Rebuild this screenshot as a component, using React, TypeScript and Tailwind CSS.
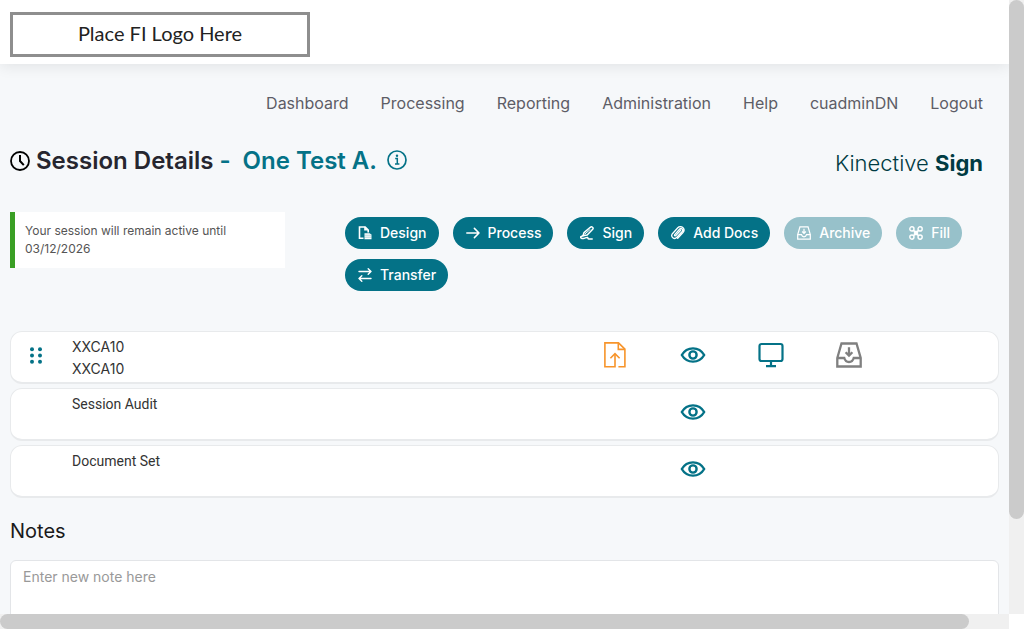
import { useState } from 'react';
import type { ReactNode } from 'react';

const navItems = ['Dashboard', 'Processing', 'Reporting', 'Administration', 'Help', 'cuadminDN', 'Logout'];

function ClockIcon() {
  return (
    <svg viewBox="0 0 20 20" className="w-5 h-5 shrink-0" fill="none" stroke="currentColor" aria-hidden="true">
      <circle cx="10" cy="10" r="9" strokeWidth="1.8" />
      <path d="M10 4v6l3.8 4.2" strokeWidth="2" />
    </svg>
  );
}

function InfoIcon() {
  return (
    <svg viewBox="0 0 20 20" className="w-5 h-5" fill="none" stroke="currentColor" aria-hidden="true">
      <circle cx="10" cy="10" r="9" strokeWidth="1.7" />
      <path d="M8.2 8.6h2.1V14M8 14.1h4.4" strokeWidth="1.5" />
      <circle cx="10" cy="5.8" r="1.2" fill="currentColor" stroke="none" />
    </svg>
  );
}

function DesignIcon() {
  return (
    <svg viewBox="0 0 14 14" className="w-3.5 h-3.5" fill="none" stroke="currentColor" aria-hidden="true">
      <path d="M5.5 12.2H1.5V1h5.7l3 3v2.5" strokeWidth="1.6" />
      <path d="M6.2.6v4h4z" fill="currentColor" stroke="none" />
      <path d="M6.5 7.2h5l2 1.3v4.7h-7z" fill="currentColor" stroke="none" />
      <path d="M6.5 9.2h7M6.5 11.2h7" stroke="#047287" strokeOpacity=".5" strokeWidth=".6" />
    </svg>
  );
}

function ProcessIcon() {
  return (
    <svg viewBox="0 0 14 14" className="w-3.5 h-3.5" fill="none" stroke="currentColor" strokeWidth="1.5" strokeLinecap="round" strokeLinejoin="round" aria-hidden="true">
      <path d="M.8 7h12.2M8.4 2.4 13 7l-4.6 4.6" />
    </svg>
  );
}

function SignIcon() {
  return (
    <svg viewBox="0 0 14 14" className="w-3.5 h-3.5" fill="none" stroke="currentColor" strokeWidth="1.5" strokeLinecap="round" strokeLinejoin="round" aria-hidden="true">
      <path d="M3 9.7 4 6.6 10.3 1.3c1.5-1.2 3.6.4 2.4 2L7.2 9 3 9.7Z" />
      <path d="M5 7.9 10 3.6" strokeWidth="1" />
      <path d="M3 9.7.8 10.6c-.5 1.2.8 2 2.6 1.9 1.6-.1 3-1.5 4.1-1 .7.4.2 1.3 1.3 1.4h3.4" />
    </svg>
  );
}

function ClipIcon() {
  return (
    <svg viewBox="0 0 14 14" className="w-3.5 h-3.5" fill="none" stroke="currentColor" strokeWidth="1.3" strokeLinecap="round" strokeLinejoin="round" aria-hidden="true">
      <path d="m9.7 4.3-4.9 5.3c-.6.7-1.7-.2-1.1-1l4.8-5.3c1.7-1.8 4.2.3 2.7 2.2l-5.3 5.8c-2.6 2.8-6.7-.4-4.5-3.6l5.4-5.9c1.3-1.3 3.6-1.5 5-.2 1.5 1.4 1.5 3.5.2 5l-5.3 5.8" />
    </svg>
  );
}

function ArchiveIcon({ className }: { className: string }) {
  return (
    <svg viewBox="0 0 26 26" className={className} fill="none" stroke="currentColor" strokeWidth="2.3" aria-hidden="true">
      <path d="M1.3 16 5.5 1.5h15L24.7 16v8.5H1.3Z" />
      <path d="M1.3 16h7c.7 2.500 2.400 4 4.700 4s4-1.500 4.700-4h7" />
      <path d="M13 5.200v8M9.600 10.200l3.400 3.400 3.400-3.400" />
    </svg>
  );
}

function FillIcon() {
  return (
    <svg viewBox="0 0 14 14" className="w-3.5 h-3.5" fill="none" stroke="currentColor" strokeWidth="1.4" aria-hidden="true">
      <circle cx="2.9" cy="2.9" r="2.1" />
      <circle cx="11.1" cy="2.9" r="2.1" />
      <circle cx="2.9" cy="11.1" r="2.1" />
      <circle cx="11.1" cy="11.1" r="2.1" />
      <path d="m4.3 4.3 2 1.2h1.4l2-1.2M4.3 9.7l2-1.2h1.4l2 1.2M5.5 6.3v1.4M8.5 6.3v1.4M4.3 4.3l5.4 5.4M9.7 4.3 4.3 9.7" />
    </svg>
  );
}

function TransferIcon() {
  return (
    <svg viewBox="0 0 14 14" className="w-3.5 h-3.5" fill="none" stroke="currentColor" strokeWidth="1.4" strokeLinecap="round" strokeLinejoin="round" aria-hidden="true">
      <path d="M1 3.5h12M10.2.8 13 3.5l-2.8 2.7M13 10.5H1M3.8 7.8 1 10.5l2.8 2.7" />
    </svg>
  );
}

function GripIcon() {
  return (
    <svg viewBox="0 0 12 17" className="w-3 h-[17px]" fill="currentColor" aria-hidden="true">
      {[2.2, 8.5, 14.8].map((y) => (
        <g key={y}>
          <circle cx="2" cy={y} r="2" />
          <circle cx="10" cy={y} r="2" />
        </g>
      ))}
    </svg>
  );
}

function UploadIcon() {
  return (
    <svg viewBox="0 0 22 26" className="w-[22px] h-[26px]" fill="none" stroke="currentColor" strokeWidth="1.6" aria-hidden="true">
      <path d="M11 12v12.8H.9V.9h13.6l6.4 6.3v17.6h-6.5" />
      <path d="M14.3.9v6.5h6.5M6.4 16.3 11 11.7l4.6 4.6" />
    </svg>
  );
}

function EyeIcon() {
  return (
    <svg viewBox="0 0 26 16" className="w-[26px] h-4" fill="none" stroke="currentColor" strokeWidth="2.4" aria-hidden="true">
      <path d="M1.8 8C4.3 3.7 8.2 1.4 13 1.4S21.7 3.7 24.2 8c-2.500 4.300-6.400 6.600-11.200 6.600S4.300 12.300 1.800 8Z" strokeLinejoin="round" />
      <circle cx="13" cy="8" r="3.6" />
    </svg>
  );
}

function DisplayIcon() {
  return (
    <svg viewBox="0 0 26 26" className="w-[26px] h-[26px]" fill="none" stroke="currentColor" strokeWidth="2.2" aria-hidden="true">
      <rect x="1.5" y="2" width="23" height="17" rx="2" />
      <path d="M13 19v5M8 24.2h10" />
    </svg>
  );
}

interface Action {
  label: string;
  icon: ReactNode;
  disabled?: boolean;
}

const actions: Action[] = [
  { label: 'Design', icon: <DesignIcon /> },
  { label: 'Process', icon: <ProcessIcon /> },
  { label: 'Sign', icon: <SignIcon /> },
  { label: 'Add Docs', icon: <ClipIcon /> },
  { label: 'Archive', icon: <ArchiveIcon className="w-3.5 h-3.5" />, disabled: true },
  { label: 'Fill', icon: <FillIcon />, disabled: true },
  { label: 'Transfer', icon: <TransferIcon /> },
];

function IconButton({ label, className = 'text-[#047287]', children }: { label: string; className?: string; children: ReactNode }) {
  return (
    <button aria-label={label} className={`h-[26px] flex items-center justify-center cursor-pointer ${className}`}>
      {children}
    </button>
  );
}

function Row({ children }: { children: ReactNode }) {
  return (
    <li className="min-h-[53px] grid grid-cols-[50px_11px_1fr_repeat(4,78px)_110px] pt-1 pb-0.5 bg-white border border-[#e8eaec] border-b-2 rounded-xl text-sm leading-[22px] text-[#333]">
      {children}
    </li>
  );
}

export default function App() {
  const [note, setNote] = useState('');

  return (
    <div className="h-screen grid grid-cols-[minmax(0,1fr)_15px] grid-rows-[minmax(0,1fr)_15px] bg-white font-['Inter',sans-serif]">
      <div className="overflow-hidden bg-[#f6f8fa]">
        <header className="h-16 px-2.5 pt-3 bg-white shadow-[0_2px_14px_rgba(0,0,0,0.09)]">
          <div className="w-[300px] h-[45px] flex items-center justify-center pb-1 border-3 border-[#8e8e8e] font-['Lato',sans-serif] text-xl text-[#222]">
            Place FI Logo Here
          </div>
        </header>

        <nav className="flex justify-end gap-8 pt-[27px] pr-[26px] text-base text-[#5d5d66]">
          {navItems.map((item) => (
            <a key={item} href="#" className="hover:text-[#047287]">
              {item}
            </a>
          ))}
        </nav>

        <main className="px-2.5 pt-[30px]">
          <div className="flex items-center justify-between pr-4">
            <h1 className="flex items-center text-2xl font-semibold text-[#26262f]">
              <span className="text-black">
                <ClockIcon />
              </span>
              <span className="ml-1.5">Session Details</span>
              <span className="ml-1.5 text-[#047287]">-</span>
              <span className="ml-3 text-[#047287]">One Test A.</span>
              <button aria-label="Session information" className="ml-2.5 pb-0.5 text-[#047287] cursor-pointer">
                <InfoIcon />
              </button>
            </h1>
            <div className="pt-1 text-[22px] leading-7 font-light text-[#003b43]">
              Kinective <strong className="font-bold">Sign</strong>
            </div>
          </div>

          <section className="grid grid-cols-[275px_minmax(0,1fr)] items-start gap-x-[60px] mt-[35px]">
            <p className="py-2.5 pl-2.5 pr-10 bg-white border-l-5 border-[#3a9f24] text-xs leading-[18px] text-[#555]">
              Your session will remain active until 03/12/2026
            </p>
            <div className="flex flex-wrap gap-x-3.5 gap-y-2.5 pt-[5px]">
              {actions.map((action) => (
                <button
                  key={action.label}
                  disabled={action.disabled}
                  className="h-8 flex items-center gap-2 pl-[13px] pr-3 rounded-full bg-[#047287] text-sm font-medium text-white cursor-pointer disabled:bg-[#97c1ca] disabled:cursor-default"
                >
                  {action.icon}
                  {action.label}
                </button>
              ))}
            </div>
          </section>

          <ul className="flex flex-col gap-1 mt-10">
            <Row>
              <div className="flex justify-center pt-1.5">
                <IconButton label="Reorder document">
                  <GripIcon />
                </IconButton>
              </div>
              <div className="col-start-3">
                <p>XXCA10</p>
                <p>XXCA10</p>
              </div>
              <div className="flex justify-center pt-1.5">
                <IconButton label="Upload document" className="text-[#f7942a]">
                  <UploadIcon />
                </IconButton>
              </div>
              <div className="flex justify-center pt-1.5">
                <IconButton label="View document">
                  <EyeIcon />
                </IconButton>
              </div>
              <div className="flex justify-center pt-1.5">
                <IconButton label="Display document">
                  <DisplayIcon />
                </IconButton>
              </div>
              <div className="flex justify-center pt-1.5">
                <IconButton label="Archive document" className="text-[#808080]">
                  <ArchiveIcon className="w-[26px] h-[26px]" />
                </IconButton>
              </div>
            </Row>
            {['Session Audit', 'Document Set'].map((name) => (
              <Row key={name}>
                <p className="col-start-3 font-['Roboto',sans-serif]">{name}</p>
                <div className="col-start-5 flex justify-center pt-1.5">
                  <IconButton label={`View ${name}`}>
                    <EyeIcon />
                  </IconButton>
                </div>
              </Row>
            ))}
          </ul>

          <label htmlFor="note" className="block mt-[19px] text-xl leading-7 text-[#1a1a1a]">
            Notes
          </label>
          <textarea
            id="note"
            value={note}
            onChange={(e) => setNote(e.target.value)}
            placeholder="Enter new note here"
            className="block w-full h-24 mt-[15px] px-3 py-1.5 bg-white border border-[#e3e5e8] rounded-md text-sm text-[#333] placeholder:text-[#999] resize-none outline-none"
          />
        </main>
      </div>

      <div className="bg-[#f0f0f0]">
        <div className="h-[84.5%] rounded-full bg-[#cbcbcb]" />
      </div>
      <div className="bg-[#f0f0f0]">
        <div className="w-[96%] h-full rounded-full bg-[#cbcbcb]" />
      </div>
    </div>
  );
}
